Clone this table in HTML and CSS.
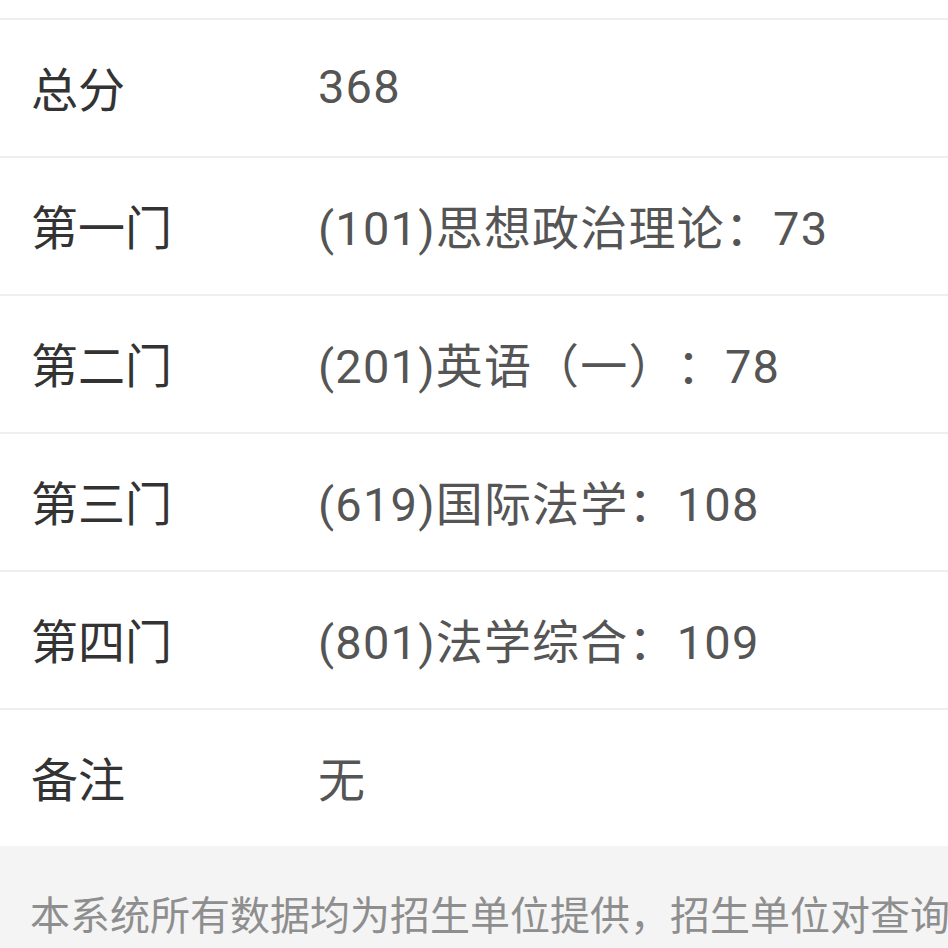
FILE: index.html
```html
<!DOCTYPE html>
<html lang="zh">
<head>
<meta charset="utf-8">
<link rel="stylesheet" href="styles.css">
</head>
<body>
<div class="page">
  <div class="top"></div>
  <div class="list">
    <div class="row"><div class="label">总分</div><div class="value">368</div></div>
    <div class="row"><div class="label">第一门</div><div class="value">(101)思想政治理论<span class="colon">：</span>73</div></div>
    <div class="row"><div class="label">第二门</div><div class="value">(201)英语（一）<span class="colon">：</span>78</div></div>
    <div class="row"><div class="label">第三门</div><div class="value">(619)国际法学<span class="colon">：</span>108</div></div>
    <div class="row"><div class="label">第四门</div><div class="value">(801)法学综合<span class="colon">：</span>109</div></div>
    <div class="row"><div class="label">备注</div><div class="value">无</div></div>
  </div>
  <div class="footer">
    <p class="note">本系统所有数据均为招生单位提供，招生单位对查询结果负责</p>
  </div>
</div>
</body>
</html>
```

FILE: styles.css
```css
html, body {
  margin: 0;
  padding: 0;
  background: #ffffff;
}
body {
  font-family: Roboto, "Noto Sans CJK SC", sans-serif;
  overflow: hidden;
  text-spacing-trim: space-all;
}
.page {
  width: 948px;
  height: 948px;
  overflow: hidden;
  display: flex;
  flex-direction: column;
}
.top {
  height: 18px;
  flex: none;
}
.list {
  display: flex;
  flex-direction: column;
  flex: none;
}
.row {
  display: grid;
  grid-template-columns: 287px 1fr;
  align-items: center;
  height: 133px;
  padding-left: 31px;
  padding-bottom: 3px;
  border-top: 2px solid #efefef;
}
.label {
  font-size: 47px;
  color: #333333;
  white-space: nowrap;
}
.value {
  font-size: 47px;
  color: #555555;
  white-space: nowrap;
  letter-spacing: 1.2px;
}
.colon {
  font-family: "Noto Sans CJK TC", "Noto Sans CJK SC", sans-serif;
}
.footer {
  flex: 1;
  background: #f4f4f4;
  padding-left: 30px;
  overflow: hidden;
}
.note {
  margin: 43px 0 0;
  font-size: 40px;
  line-height: 56px;
  color: #8e8e8e;
  white-space: nowrap;
  text-spacing-trim: space-all;
}
```
